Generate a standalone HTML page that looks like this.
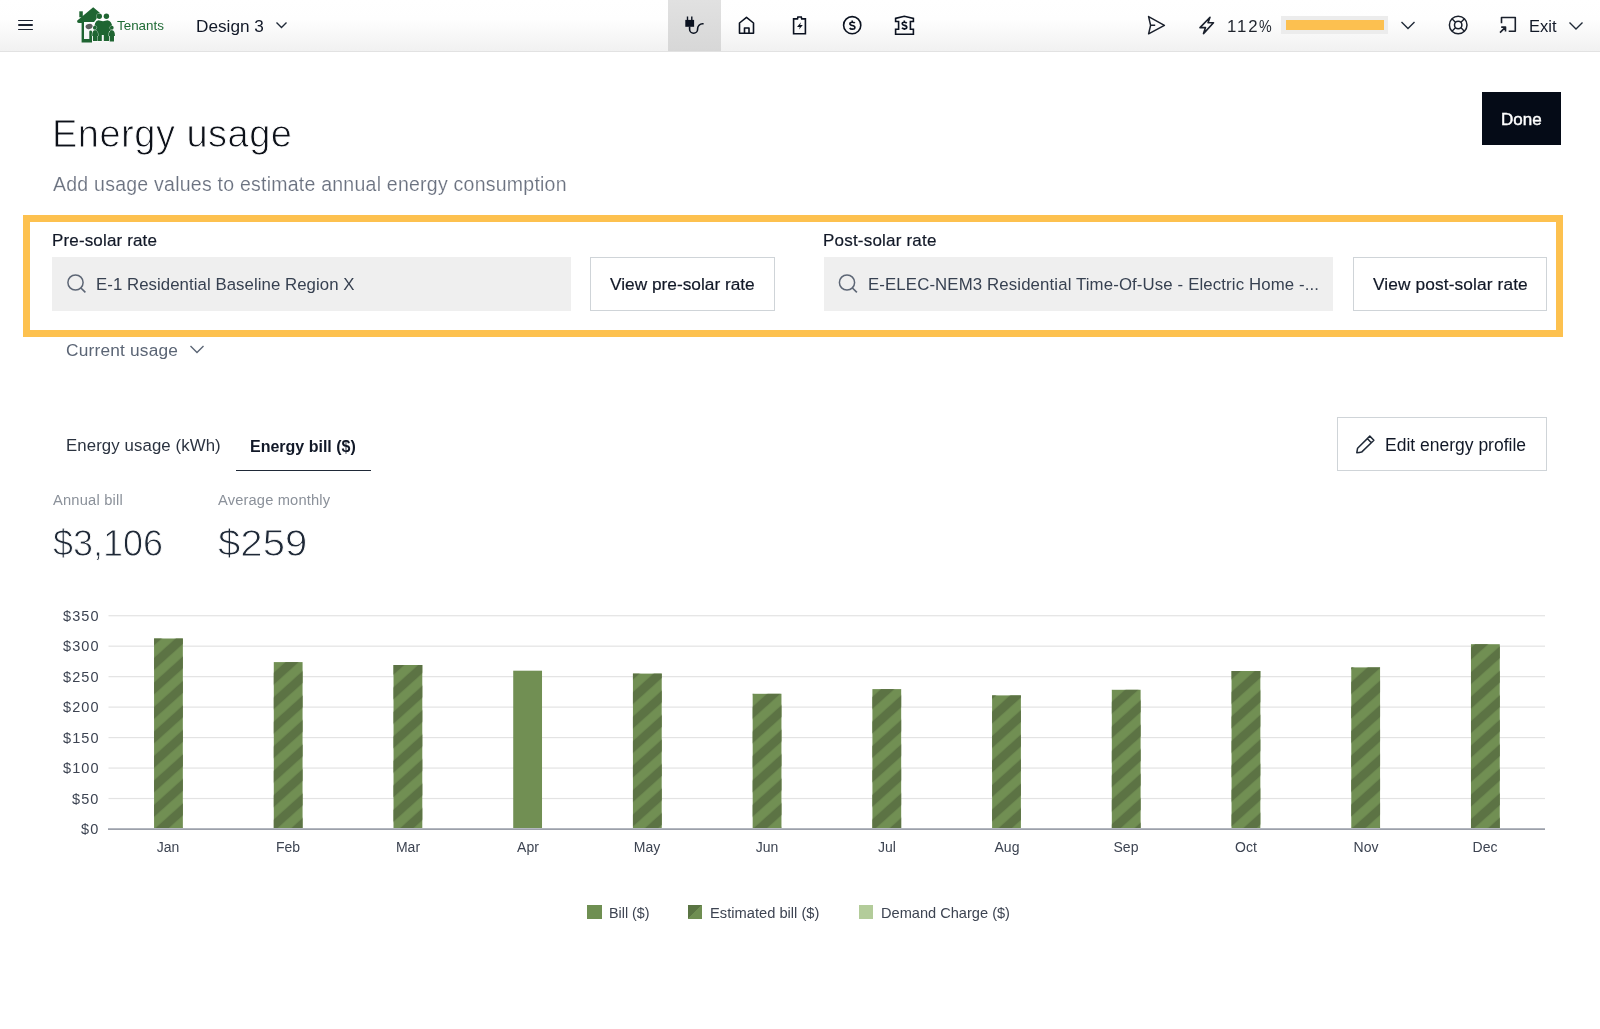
<!DOCTYPE html>
<html><head><meta charset="utf-8"><style>
html,body{margin:0;padding:0;background:#fff;}
body{width:1600px;height:1029px;position:relative;overflow:hidden;font-family:"Liberation Sans",sans-serif;}
.t{position:absolute;line-height:1;white-space:nowrap;will-change:transform;}
.a{position:absolute;}
svg{position:absolute;overflow:visible;}
</style></head><body>
<div class="a" style="left:0;top:0;width:1600px;height:51px;background:linear-gradient(#fff 0%,#fefefe 38%,#f1f1f1 100%);border-bottom:1px solid #e2e2e2;"></div>
<div class="a" style="left:668px;top:0;width:53px;height:51px;background:linear-gradient(#e1e1e1,#d7d7d7);"></div>
<div class="a" style="left:18px;top:19.6px;width:15px;height:1.6px;background:#1b2230;border-radius:1px;"></div>
<div class="a" style="left:18px;top:24.4px;width:15px;height:1.6px;background:#1b2230;border-radius:1px;"></div>
<div class="a" style="left:18px;top:28.8px;width:15px;height:1.6px;background:#1b2230;border-radius:1px;"></div>
<svg style="left:0;top:0" width="1600" height="51">
<g fill="#1f6532">
<path d="M77.3 20.6 L93.2 7.3 L99.8 12.8 L96 19.5 L94 21.9 L84 21.9 L84 39.1 L89.3 39.1 L89.3 31.5 Q89.3 30.4 90.6 30.4 Q92 30.4 92 31.5 L92 42.4 L81.6 42.4 L81.6 22.9 L79 22.9 Q76.5 22.9 77.3 20.6 Z"/>
<rect x="79.3" y="11.3" width="3.5" height="6"/>
</g>
<ellipse cx="89.1" cy="26.4" rx="3.6" ry="2.6" fill="#5e5e5e" transform="rotate(-15 89.1 26.4)"/>
<g fill="#1f6532" stroke="#fff" stroke-width="0.7" paint-order="stroke">
<path d="M94.3 30 Q94 21 98.5 20.3 L103 21.2 L107.5 20.3 Q112 21 112.4 28 L112.4 31 L109 31 L109 41.1 L103.8 41.1 L103.8 35 L101.8 35 L101.8 41.1 L96.6 41.1 L96.6 31 L94.3 31 Z"/>
<circle cx="99.3" cy="16.2" r="2.7"/>
<circle cx="106.4" cy="16.2" r="2.7"/>
<circle cx="94.8" cy="27.7" r="1.85"/>
<path d="M92.2 35 Q92.2 30.3 95 30.3 Q97.9 30.3 98 35 L98 36 L97.2 36 L97.2 41.1 L93 41.1 L93 36 L92.2 36 Z"/>
<circle cx="111.8" cy="27.7" r="1.85"/>
<path d="M108.9 35 Q108.9 30.3 111.8 30.3 Q114.8 30.3 114.9 35 L114.9 36 L114 36 L114 41.6 L109.7 41.6 L109.7 36 L108.9 36 Z"/>
</g>
</svg>
<div class="t" style="left:117px;top:19.26px;font-size:13.4px;color:#1f6b35;">Tenants</div>
<div class="t" style="left:196px;top:18.04px;font-size:17.2px;color:#111827;">Design 3</div>
<svg style="left:0;top:0" width="1" height="1"><path d="M276.5 22.5 L281.5 27.5 L286.5 22.5" fill="none" stroke="#1f2937" stroke-width="1.35"/></svg>
<svg style="left:0;top:0" width="1" height="1" fill="none" stroke="#0b1220" stroke-width="1.6">
<rect x="685.3" y="19.9" width="8.8" height="6.9" fill="#0b1220" stroke="none"/>
<path d="M687.5 16.5 v3.5 M691.8 16.5 v3.5" stroke-width="1.4"/>
<path d="M689.6 26.6 v2.6 a4 4 0 0 0 8 0 v-0.4 a5 5 0 0 1 5 -5 h1" stroke-width="1.6"/>
<path d="M739.5 33.2 V23 L746.5 17.3 L753.5 23 V33.2 Z M744.5 33.2 V28 h4.5 V33.2" stroke-linejoin="round"/>
<path d="M793.6 33.7 V18.9 H797.5 L797.9 17 H801.3 L801.7 18.9 H805.4 V33.7 Z"/>
<path d="M801 22.3 L797 27 H799.8 L799 29.6 L802.8 25 H800.1 Z" fill="#0b1220" stroke="none"/>
<circle cx="852.2" cy="25.2" r="8.6"/>
<path d="M854.8 23.2 q-0.6 -1 -2.5 -1 q-2.4 0 -2.4 1.6 q0 1.3 2.4 1.7 q2.6 0.4 2.6 2 q0 1.7 -2.6 1.7 q-1.9 0 -2.6 -1.2 M852.2 20.5 v1.8 M852.2 28.3 v1.8" stroke-width="1.6"/>
<path d="M895.6 18.4 L904.3 16.3 L913.4 18.4 V21.5 h-3 V29.3 h3 V34.2 h-17.8 V29.3 h3 V21.5 h-3 Z"/>
<path d="M906.7 23.2 q-0.6 -0.9 -2.3 -0.9 q-2.2 0 -2.2 1.5 q0 1.2 2.2 1.6 q2.4 0.4 2.4 1.9 q0 1.6 -2.4 1.6 q-1.7 0 -2.4 -1.1 M904.3 20.6 v1.7 M904.3 28.3 v1.7" stroke-width="1.6"/>
</svg>
<svg style="left:0;top:0" width="1" height="1" fill="none" stroke="#1a202c" stroke-width="1.6" stroke-linejoin="round">
<path d="M1148.6 16.6 L1164.4 25.3 L1148.6 33.8 L1150.6 25.3 Z M1150.6 25.3 h4.6" stroke-width="1.5"/>
<path d="M1213.5 22.8 h-5.5 l2 -5.5 l-10 10.3 h5.5 l-2 6 z"/>
<path d="M1460.75 22.45 L1464.4 18.8 M1455.65 22.45 L1452 18.8 M1455.65 27.55 L1452 31.2 M1460.75 27.55 L1464.4 31.2" stroke-width="1.4"/>
<circle cx="1458.2" cy="25" r="8.8" stroke-width="1.5"/><circle cx="1458.2" cy="25" r="3.7" stroke-width="1.5"/>
<path d="M1501.5 23.2 V17.5 h13.8 V31.3 h-6.6 M1500 32.6 l5.5 -5.5 M1501.2 27.1 h4.3 v4.3"/>
</svg>
<div class="t" style="left:1227px;top:18.58px;font-size:16.8px;color:#1f242d;"><span style="letter-spacing:1.9px">112</span><span style="display:inline-block;transform:scaleX(0.85);transform-origin:0 0">%</span></div>
<div class="a" style="left:1281px;top:16px;width:107px;height:18px;background:#ececec;"></div>
<div class="a" style="left:1286px;top:20px;width:97.5px;height:9.5px;background:#fcc050;"></div>
<svg style="left:0;top:0" width="1" height="1"><path d="M1401.5 22 L1408.0 28.5 L1414.5 22" fill="none" stroke="#1f2937" stroke-width="1.35"/></svg>
<div class="t" style="left:1528.5px;top:18.03px;font-size:16.5px;color:#111827;">Exit</div>
<svg style="left:0;top:0" width="1" height="1"><path d="M1569.5 22.5 L1576.0 29 L1582.5 22.5" fill="none" stroke="#1f2937" stroke-width="1.35"/></svg>
<div class="t" style="left:52px;top:115.13px;font-size:38px;color:#0d1119;letter-spacing:0.5px;-webkit-text-stroke:0.9px #fff;">Energy usage</div>
<div class="t" style="left:52.5px;top:174.89px;font-size:19.5px;color:#6b7280;letter-spacing:0.24px;-webkit-text-stroke:0.15px #fff;">Add usage values to estimate annual energy consumption</div>
<div class="a" style="left:1481.5px;top:91.5px;width:79.5px;height:53.3px;background:#050b17;"></div>
<div class="t" style="left:1500.5px;top:110.61px;font-size:17px;color:#ffffff;-webkit-text-stroke:0.45px currentColor;">Done</div>
<div class="a" style="left:23px;top:215px;width:1526px;height:108px;border:7px solid #fdc14f;"></div>
<div class="t" style="left:52px;top:231.61px;font-size:17px;color:#111827;letter-spacing:0.15px;-webkit-text-stroke:0.2px currentColor;">Pre-solar rate</div>
<div class="t" style="left:823px;top:232.11px;font-size:17px;color:#111827;letter-spacing:0.2px;-webkit-text-stroke:0.2px currentColor;">Post-solar rate</div>
<div class="a" style="left:52px;top:257px;width:518.5px;height:53.5px;background:#efefef;"></div>
<div class="a" style="left:823.5px;top:257px;width:509.7px;height:53.5px;background:#efefef;"></div>
<svg style="left:0;top:0" width="1" height="1"><circle cx="75.5" cy="282.5" r="7.6" fill="none" stroke="#5d6675" stroke-width="1.5"/><path d="M80.9 288 l4.5 4.3" stroke="#5d6675" stroke-width="1.6"/></svg>
<svg style="left:0;top:0" width="1" height="1"><circle cx="847" cy="282.5" r="7.6" fill="none" stroke="#5d6675" stroke-width="1.5"/><path d="M852.4 288 l4.5 4.3" stroke="#5d6675" stroke-width="1.6"/></svg>
<div class="t" style="left:96px;top:277.28px;font-size:16.8px;color:#374151;letter-spacing:0.06px;">E-1 Residential Baseline Region X</div>
<div class="t" style="left:867.5px;top:277.28px;font-size:16.8px;color:#374151;letter-spacing:0.13px;">E-ELEC-NEM3 Residential Time-Of-Use - Electric Home -...</div>
<div class="a" style="left:589.5px;top:257.3px;width:183.5px;height:51.3px;border:1px solid #cfd4d8;background:#fff;"></div>
<div class="a" style="left:1353px;top:257.4px;width:191.6px;height:51.2px;border:1px solid #cfd4d8;background:#fff;"></div>
<div class="t" style="left:610px;top:276.46px;font-size:17.3px;color:#111827;-webkit-text-stroke:0.2px currentColor;">View pre-solar rate</div>
<div class="t" style="left:1373px;top:276.46px;font-size:17.3px;color:#111827;letter-spacing:0.12px;-webkit-text-stroke:0.2px currentColor;">View post-solar rate</div>
<div class="t" style="left:66px;top:341.66px;font-size:17.3px;color:#5b6575;letter-spacing:0.2px;">Current usage</div>
<svg style="left:0;top:0" width="1" height="1"><path d="M190.5 346 L197.0 352.5 L203.5 346" fill="none" stroke="#5b6575" stroke-width="1.35"/></svg>
<div class="t" style="left:66px;top:438.18px;font-size:16.8px;color:#2b3340;letter-spacing:0.1px;">Energy usage (kWh)</div>
<div class="t" style="left:250px;top:438.86px;font-size:16px;color:#111827;font-weight:700;">Energy bill ($)</div>
<div class="a" style="left:235.5px;top:469.6px;width:135.4px;height:1.6px;background:#1f2937;"></div>
<div class="a" style="left:1337px;top:417px;width:207.6px;height:52px;border:1px solid #cfd4d8;"></div>
<svg style="left:0;top:0" width="1" height="1" fill="none" stroke="#1f2937" stroke-width="1.5" stroke-linejoin="round">
<path d="M1356.8 452.7 L1357.6 448.2 L1369.8 436.1 L1373.9 440.2 L1361.6 452.1 Q1359.5 452.6 1356.8 452.7 Z M1367.3 438.6 L1371.3 442.7"/>
</svg>
<div class="t" style="left:1385px;top:436.59px;font-size:17.5px;color:#111827;">Edit energy profile</div>
<div class="t" style="left:52.5px;top:492.86px;font-size:14.7px;color:#8b919a;letter-spacing:0.2px;">Annual bill</div>
<div class="t" style="left:217.5px;top:492.86px;font-size:14.7px;color:#8b919a;letter-spacing:0.15px;">Average monthly</div>
<div class="t" style="left:53px;top:526.33px;font-size:36px;color:#1f2937;-webkit-text-stroke:0.9px #fff;">$3,106</div>
<div class="t" style="left:218px;top:526.33px;font-size:36px;color:#1f2937;transform:scaleX(1.115);transform-origin:0 0;-webkit-text-stroke:0.9px #fff;">$259</div>
<svg style="left:0;top:0" width="1600" height="1029"><defs><pattern id="st" patternUnits="userSpaceOnUse" x="4.95" y="0" width="18.2" height="40" patternTransform="rotate(48)"><rect x="4.55" y="-1" width="9.1" height="42" fill="#5c7344"/></pattern></defs><rect x="108.5" y="797.93" width="1436.5" height="1.2" fill="#e3e3e3"/><rect x="108.5" y="767.46" width="1436.5" height="1.2" fill="#e3e3e3"/><rect x="108.5" y="736.99" width="1436.5" height="1.2" fill="#e3e3e3"/><rect x="108.5" y="706.52" width="1436.5" height="1.2" fill="#e3e3e3"/><rect x="108.5" y="676.05" width="1436.5" height="1.2" fill="#e3e3e3"/><rect x="108.5" y="645.58" width="1436.5" height="1.2" fill="#e3e3e3"/><rect x="108.5" y="615.11" width="1436.5" height="1.2" fill="#e3e3e3"/><rect x="154.06" y="638.5" width="28.8" height="190.50" fill="#718f53"/><rect x="154.06" y="638.5" width="28.8" height="190.50" fill="url(#st)"/><rect x="273.78" y="662.1" width="28.8" height="166.90" fill="#718f53"/><rect x="273.78" y="662.1" width="28.8" height="166.90" fill="url(#st)"/><rect x="393.50" y="665" width="28.8" height="164.00" fill="#718f53"/><rect x="393.50" y="665" width="28.8" height="164.00" fill="url(#st)"/><rect x="513.22" y="670.7" width="28.8" height="158.30" fill="#718f53"/><rect x="632.94" y="673.6" width="28.8" height="155.40" fill="#718f53"/><rect x="632.94" y="673.6" width="28.8" height="155.40" fill="url(#st)"/><rect x="752.66" y="693.8" width="28.8" height="135.20" fill="#718f53"/><rect x="752.66" y="693.8" width="28.8" height="135.20" fill="url(#st)"/><rect x="872.38" y="689.1" width="28.8" height="139.90" fill="#718f53"/><rect x="872.38" y="689.1" width="28.8" height="139.90" fill="url(#st)"/><rect x="992.10" y="695.4" width="28.8" height="133.60" fill="#718f53"/><rect x="992.10" y="695.4" width="28.8" height="133.60" fill="url(#st)"/><rect x="1111.82" y="689.8" width="28.8" height="139.20" fill="#718f53"/><rect x="1111.82" y="689.8" width="28.8" height="139.20" fill="url(#st)"/><rect x="1231.54" y="671" width="28.8" height="158.00" fill="#718f53"/><rect x="1231.54" y="671" width="28.8" height="158.00" fill="url(#st)"/><rect x="1351.26" y="667.4" width="28.8" height="161.60" fill="#718f53"/><rect x="1351.26" y="667.4" width="28.8" height="161.60" fill="url(#st)"/><rect x="1470.98" y="644.2" width="28.8" height="184.80" fill="#718f53"/><rect x="1470.98" y="644.2" width="28.8" height="184.80" fill="url(#st)"/><rect x="108" y="828" width="1437" height="1" fill="#b3b7bf"/><rect x="108" y="829" width="1437" height="1" fill="#9ca0aa"/></svg>
<div class="t" style="right:1500.4px;top:822.03px;font-size:14.5px;color:#3d4452;letter-spacing:1.1px;">$0</div>
<div class="t" style="right:1500.4px;top:791.56px;font-size:14.5px;color:#3d4452;letter-spacing:1.1px;">$50</div>
<div class="t" style="right:1500.4px;top:761.09px;font-size:14.5px;color:#3d4452;letter-spacing:1.1px;">$100</div>
<div class="t" style="right:1500.4px;top:730.62px;font-size:14.5px;color:#3d4452;letter-spacing:1.1px;">$150</div>
<div class="t" style="right:1500.4px;top:700.15px;font-size:14.5px;color:#3d4452;letter-spacing:1.1px;">$200</div>
<div class="t" style="right:1500.4px;top:669.68px;font-size:14.5px;color:#3d4452;letter-spacing:1.1px;">$250</div>
<div class="t" style="right:1500.4px;top:639.21px;font-size:14.5px;color:#3d4452;letter-spacing:1.1px;">$300</div>
<div class="t" style="right:1500.4px;top:608.74px;font-size:14.5px;color:#3d4452;letter-spacing:1.1px;">$350</div>
<div class="t" style="left:68.45999999999998px;width:200px;text-align:center;top:840.15px;font-size:14px;color:#3d4452;">Jan</div>
<div class="t" style="left:188.17999999999995px;width:200px;text-align:center;top:840.15px;font-size:14px;color:#3d4452;">Feb</div>
<div class="t" style="left:307.9px;width:200px;text-align:center;top:840.15px;font-size:14px;color:#3d4452;">Mar</div>
<div class="t" style="left:427.62px;width:200px;text-align:center;top:840.15px;font-size:14px;color:#3d4452;">Apr</div>
<div class="t" style="left:547.34px;width:200px;text-align:center;top:840.15px;font-size:14px;color:#3d4452;">May</div>
<div class="t" style="left:667.0600000000001px;width:200px;text-align:center;top:840.15px;font-size:14px;color:#3d4452;">Jun</div>
<div class="t" style="left:786.78px;width:200px;text-align:center;top:840.15px;font-size:14px;color:#3d4452;">Jul</div>
<div class="t" style="left:906.5px;width:200px;text-align:center;top:840.15px;font-size:14px;color:#3d4452;">Aug</div>
<div class="t" style="left:1026.22px;width:200px;text-align:center;top:840.15px;font-size:14px;color:#3d4452;">Sep</div>
<div class="t" style="left:1145.9399999999998px;width:200px;text-align:center;top:840.15px;font-size:14px;color:#3d4452;">Oct</div>
<div class="t" style="left:1265.6599999999999px;width:200px;text-align:center;top:840.15px;font-size:14px;color:#3d4452;">Nov</div>
<div class="t" style="left:1385.3799999999999px;width:200px;text-align:center;top:840.15px;font-size:14px;color:#3d4452;">Dec</div>
<div class="a" style="left:587px;top:905px;width:14.5px;height:14px;background:#6f8f52;"></div>
<div class="a" style="left:687.5px;top:905px;width:14.5px;height:14px;background:linear-gradient(135deg,#5a7443 50%,#6f8e52 50%);"></div>
<div class="a" style="left:858.5px;top:905px;width:14.5px;height:14px;background:#b3cc9a;"></div>
<div class="t" style="left:609px;top:905.90px;font-size:14.3px;color:#3d4452;">Bill ($)</div>
<div class="t" style="left:709.5px;top:905.56px;font-size:14.7px;color:#3d4452;">Estimated bill ($)</div>
<div class="t" style="left:880.5px;top:905.64px;font-size:14.6px;color:#3d4452;">Demand Charge ($)</div>
</body></html>
